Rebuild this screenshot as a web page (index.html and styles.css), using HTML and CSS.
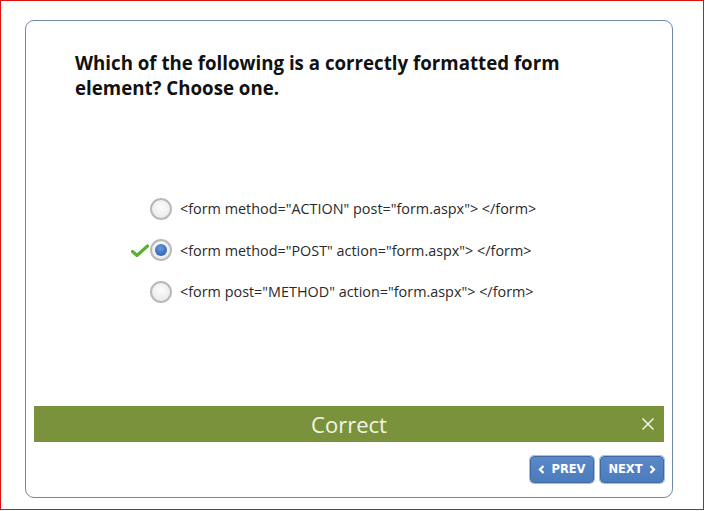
FILE: index.html
```html
<!DOCTYPE html>
<html>
<head>
<meta charset="utf-8">
<link rel="stylesheet" href="styles.css">
</head>
<body>
<div class="frame">
  <div class="card">
    <h1 class="question">Which of the following is a correctly formatted form element? Choose one.</h1>
    <ul class="options">
      <li class="option">
        <span class="radio"></span>
        <span class="label">&lt;form method="ACTION" post="form.aspx"&gt; &lt;/form&gt;</span>
      </li>
      <li class="option">
        <svg class="check" width="18" height="14" viewBox="0 0 18 14"><path d="M1.5 7.5 L6 11.5 L16.5 2" fill="none" stroke="#5cb030" stroke-width="3.2" stroke-linecap="round" stroke-linejoin="round"/></svg>
        <span class="radio selected"><span class="dot"></span></span>
        <span class="label">&lt;form method="POST" action="form.aspx"&gt; &lt;/form&gt;</span>
      </li>
      <li class="option">
        <span class="radio"></span>
        <span class="label">&lt;form post="METHOD" action="form.aspx"&gt; &lt;/form&gt;</span>
      </li>
    </ul>
    <div class="banner">
      <span class="banner-text">Correct</span>
      <svg class="close" width="14" height="14" viewBox="0 0 14 14"><path d="M1.5 1.5 L12.5 12.5 M12.5 1.5 L1.5 12.5" stroke="#f4f4ea" stroke-width="1.5" fill="none"/></svg>
    </div>
    <div class="nav">
      <button class="btn"><svg width="7" height="9" viewBox="0 0 7 9"><path d="M5.5 1 L2 4.5 L5.5 8" fill="none" stroke="#fff" stroke-width="2.2"/></svg>PREV</button>
      <button class="btn">NEXT<svg width="7" height="9" viewBox="0 0 7 9"><path d="M1.5 1 L5 4.5 L1.5 8" fill="none" stroke="#fff" stroke-width="2.2"/></svg></button>
    </div>
  </div>
</div>
</body>
</html>
```

FILE: styles.css
```css
html, body {
  margin: 0;
  padding: 0;
  background: #fff;
}
.frame {
  box-sizing: border-box;
  width: 704px;
  height: 510px;
  border: 1px solid #e01010;
  padding-top: 19px;
  padding-left: 24px;
}
.card {
  box-sizing: border-box;
  width: 648px;
  height: 478px;
  border: 1px solid #6f88a8;
  border-radius: 9px;
  display: flex;
  flex-direction: column;
  padding: 29px 8px 0 8px;
}
.question {
  margin: 0 0 0 41px;
  width: 560px;
  font-family: "Open Sans", sans-serif;
  font-weight: 700;
  font-size: 18.7px;
  line-height: 25px;
  color: #111;
}
.options {
  list-style: none;
  margin: 88px 0 0 116px;
  padding: 0;
}
.option {
  position: relative;
  height: 41.5px;
  display: flex;
  align-items: center;
  gap: 8px;
}
.check {
  position: absolute;
  left: -19px;
  top: 14px;
}
.radio {
  box-sizing: border-box;
  width: 22px;
  height: 22px;
  border-radius: 50%;
  border: 2px solid #b9b9b9;
  background: radial-gradient(circle at 50% 40%, #fcfcfc 0%, #ececec 70%, #e2e2e2 100%);
  display: flex;
  align-items: center;
  justify-content: center;
  flex: none;
}
.dot {
  width: 12px;
  height: 12px;
  border-radius: 50%;
  background: radial-gradient(circle at 45% 35%, #6a9ae0 0%, #3a6fc0 60%, #2f5ea8 100%);
}
.label {
  font-family: "Open Sans", sans-serif;
  font-size: 14.4px;
  color: #2a2a2a;
  white-space: nowrap;
}
.banner {
  margin-top: 93px;
  height: 36px;
  background: #7a923b;
  position: relative;
  display: flex;
  align-items: center;
  justify-content: center;
}
.banner-text {
  font-family: "Open Sans", sans-serif;
  font-size: 22px;
  color: #f3f5e8;
}
.close {
  position: absolute;
  right: 9px;
  top: 11px;
}
.nav {
  margin-top: 14px;
  display: flex;
  justify-content: flex-end;
  gap: 6px;
}
.btn {
  box-sizing: border-box;
  width: 64px;
  height: 27px;
  border: 1px solid #3f6aa5;
  border-radius: 4px;
  background: linear-gradient(#5a88c8, #4c7cbd);
  box-shadow: 0 0 0 1px #a9bfdc;
  color: #fff;
  font-family: "DejaVu Sans", Verdana, sans-serif;
  font-weight: 700;
  font-size: 11.5px;
  display: flex;
  align-items: center;
  justify-content: center;
  gap: 6px;
  padding: 0;
}
```
